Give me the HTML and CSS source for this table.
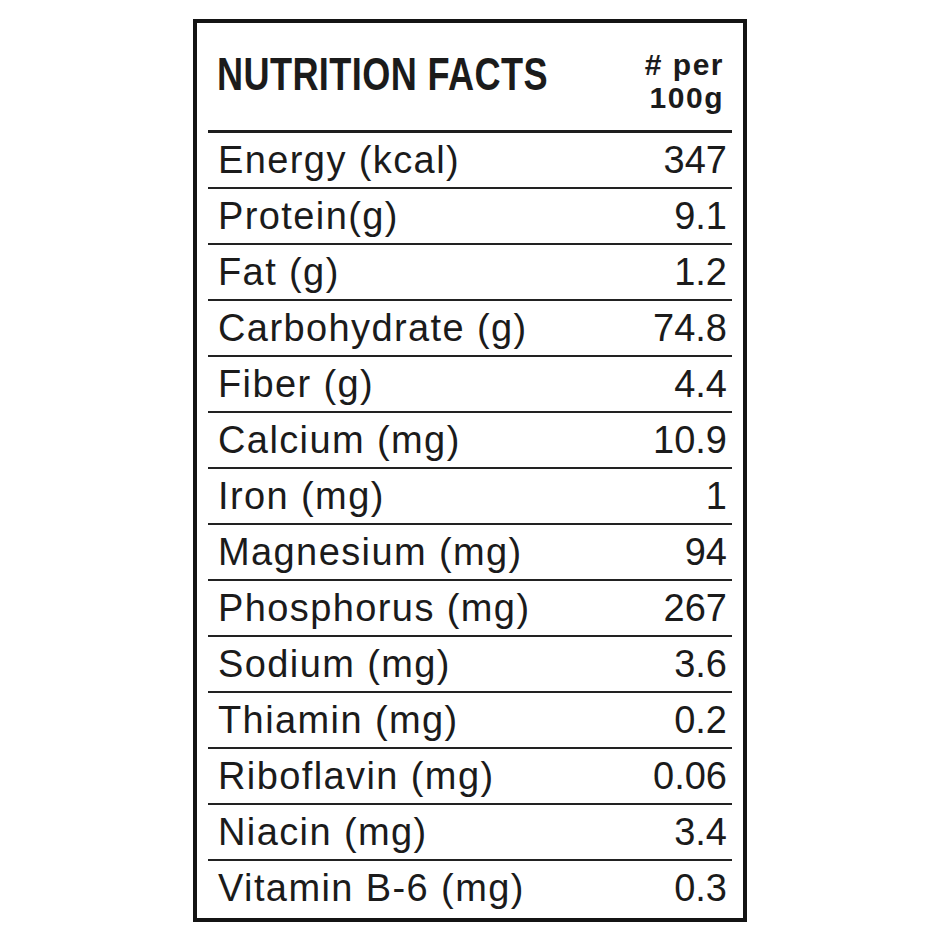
FILE: index.html
```html
<!DOCTYPE html>
<html lang="en">
<head>
<meta charset="utf-8">
<title>Nutrition Facts</title>
<link rel="stylesheet" href="styles.css">
</head>
<body>
<div class="label">
  <div class="header">
    <h1 class="title"><span class="title-text">NUTRITION FACTS</span></h1>
    <div class="per">
      <div># per</div>
      <div>100g</div>
    </div>
  </div>
  <div class="rows">
    <div class="row"><span class="name">Energy (kcal)</span><span class="value">347</span></div>
    <div class="row"><span class="name">Protein(g)</span><span class="value">9.1</span></div>
    <div class="row"><span class="name">Fat (g)</span><span class="value">1.2</span></div>
    <div class="row"><span class="name">Carbohydrate (g)</span><span class="value">74.8</span></div>
    <div class="row"><span class="name">Fiber (g)</span><span class="value">4.4</span></div>
    <div class="row"><span class="name">Calcium (mg)</span><span class="value">10.9</span></div>
    <div class="row"><span class="name">Iron (mg)</span><span class="value">1</span></div>
    <div class="row"><span class="name">Magnesium (mg)</span><span class="value">94</span></div>
    <div class="row"><span class="name">Phosphorus (mg)</span><span class="value">267</span></div>
    <div class="row"><span class="name">Sodium (mg)</span><span class="value">3.6</span></div>
    <div class="row"><span class="name">Thiamin (mg)</span><span class="value">0.2</span></div>
    <div class="row"><span class="name">Riboflavin (mg)</span><span class="value">0.06</span></div>
    <div class="row"><span class="name">Niacin (mg)</span><span class="value">3.4</span></div>
    <div class="row"><span class="name">Vitamin B-6 (mg)</span><span class="value">0.3</span></div>
  </div>
</div>
</body>
</html>
```

FILE: styles.css
```css
* {
  box-sizing: border-box;
}

html, body {
  margin: 0;
  padding: 0;
  background: #ffffff;
}

body {
  width: 940px;
  height: 940px;
  padding: 19px 0 0 193px;
  font-family: "Liberation Sans", Arial, sans-serif;
  color: #1b1b1b;
}

.label {
  width: 554px;
  height: 903px;
  border: 4px solid #141414;
  padding: 0 11px;
  display: flex;
  flex-direction: column;
}

.header {
  height: 110px;
  display: flex;
  justify-content: space-between;
  align-items: flex-start;
  border-bottom: 3px solid #1e1e1e;
  padding: 0 8px 0 9px;
}

.title {
  margin: 28px 0 0 0;
  font-size: 46px;
  line-height: 46px;
  font-weight: 700;
  white-space: nowrap;
}

.title-text {
  display: inline-block;
  transform: scaleX(0.785);
  transform-origin: left center;
  letter-spacing: 0.5px;
}

.per {
  margin-top: 25px;
  font-size: 30px;
  line-height: 33px;
  font-weight: 700;
  text-align: right;
  letter-spacing: 1.5px;
}

.rows {
  display: flex;
  flex-direction: column;
}

.row {
  height: 56px;
  display: flex;
  justify-content: space-between;
  align-items: flex-start;
  padding: 3px 5px 0 10px;
  border-bottom: 2px solid #222222;
  font-size: 38px;
  line-height: 48px;
}

.row:last-child {
  border-bottom: none;
}

.name {
  letter-spacing: 1.4px;
}

.value {
  text-align: right;
}
```
